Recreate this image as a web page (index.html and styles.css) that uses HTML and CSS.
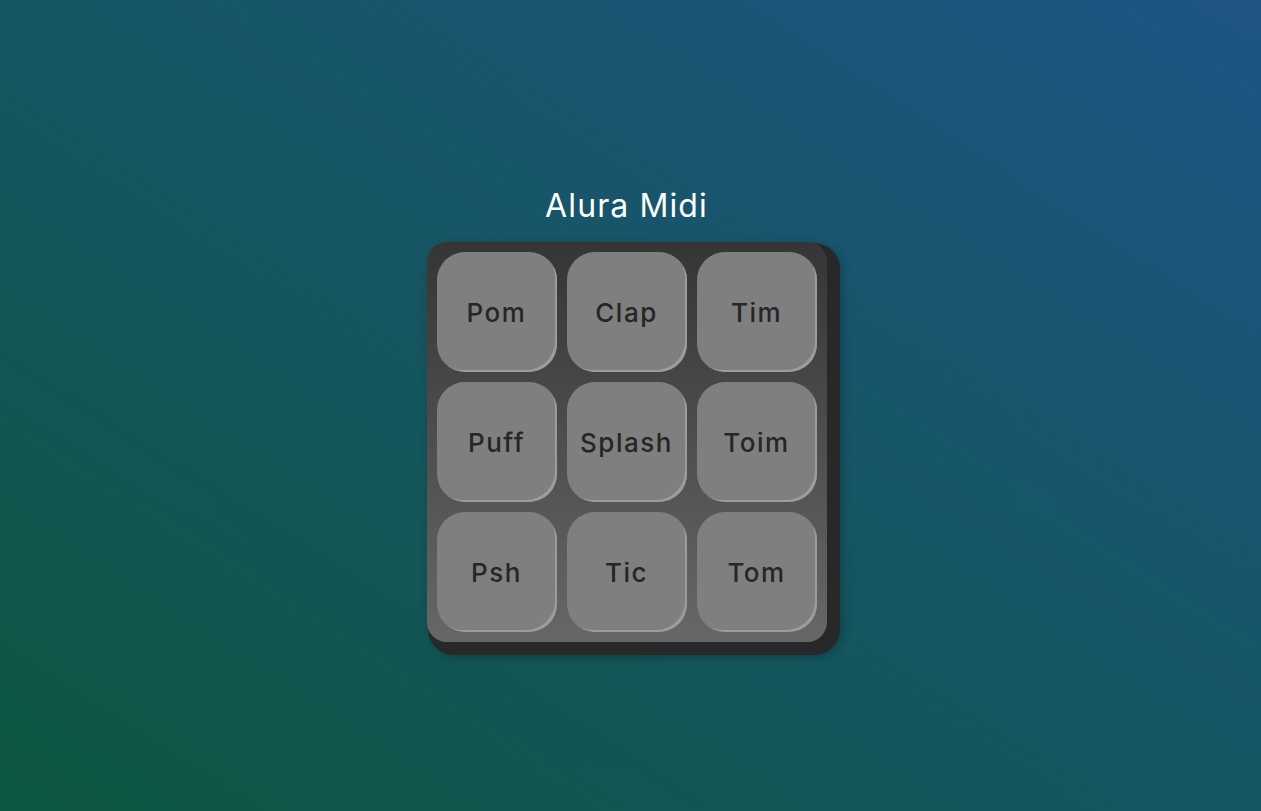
FILE: index.html
```html
<!DOCTYPE html>
<html lang="pt-br">
<head>
<meta charset="UTF-8">
<title>Alura Midi</title>
<link rel="stylesheet" href="styles.css">
</head>
<body>
  <h1 class="titulo">Alura Midi</h1>
  <section class="teclado">
    <button class="tecla">Pom</button>
    <button class="tecla">Clap</button>
    <button class="tecla">Tim</button>
    <button class="tecla">Puff</button>
    <button class="tecla">Splash</button>
    <button class="tecla">Toim</button>
    <button class="tecla">Psh</button>
    <button class="tecla">Tic</button>
    <button class="tecla">Tom</button>
  </section>
</body>
</html>
```
FILE: styles.css
```css
html, body {
  height: 100%;
}
body {
  margin: 0;
  padding-right: 8px;
  box-sizing: border-box;
  background: linear-gradient(to top right, #0c5741, #1f5484);
  display: flex;
  flex-direction: column;
  align-items: center;
  justify-content: center;
  font-family: Inter, "Liberation Sans", sans-serif;
}
.titulo {
  margin: 17px 0 16px;
  color: #ffffff;
  font-size: 32px;
  line-height: 40px;
  font-weight: 400;
  letter-spacing: 1.1px;
}
.teclado {
  display: grid;
  grid-template-columns: repeat(3, 120px);
  grid-auto-rows: 120px;
  gap: 10px;
  padding: 10px;
  border-radius: 20px;
  background: linear-gradient(to bottom, #353535, #676767);
  box-shadow: 7px 7px 0 6px #282828, 9px 9px 10px 6px rgba(0, 0, 0, 0.25);
}
.tecla {
  border: none;
  border-radius: 28px;
  background-color: #7f7f7f;
  box-shadow: inset -3px -3px 0 -1px #9c9c9c;
  color: #262626;
  font-family: Inter, "Liberation Sans", sans-serif;
  font-size: 26px;
  font-weight: 500;
  letter-spacing: 1.5px;
  padding: 0;
  cursor: pointer;
}
```
